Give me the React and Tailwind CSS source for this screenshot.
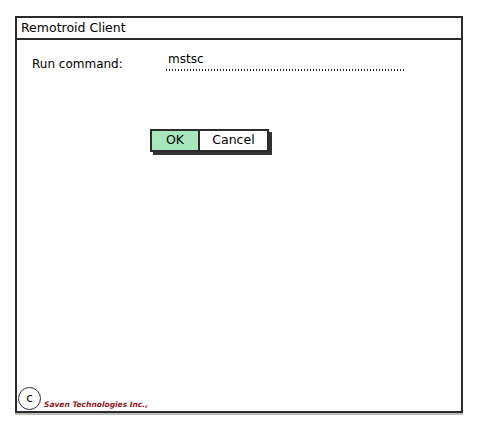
export default function App() {
  const font = { fontFamily: '"Comic Sans MS", "DejaVu Sans", sans-serif' };
  return (
    <div className="w-[495px] h-[445px] bg-white pt-[16px] pl-[15px]" style={font}>
      <div className="w-[448px] h-[397px] border-2 border-[#2b2b2b] flex flex-col shadow-[0_2px_0_#bbb]">
        <div className="h-[22px] border-b-2 border-[#2b2b2b] flex items-center pl-[4px] text-[12.5px] text-black leading-none">
          Remotroid Client
        </div>
        <div className="flex-1 flex flex-col relative">
          <div className="flex items-end mt-[13px] ml-[15px] h-[18px]">
            <span className="text-[12px] w-[134px] leading-none pb-[1px]">Run command:</span>
            <div className="flex flex-col w-[240px]">
              <span className="text-[12px] leading-none pl-[2px] -mt-[6px]">mstsc</span>
              <div className="h-[2px] mt-[4px] bg-[linear-gradient(to_right,#333_1px,transparent_1px)] bg-[length:3px_2px]" />
            </div>
          </div>
          <div className="ml-[133px] mt-[58px] flex w-[119px] h-[23px] border-2 border-[#2b2b2b] shadow-[3px_3px_0_#333]">
            <div className="w-[48px] bg-[#a8e6bb] border-r-2 border-[#2b2b2b] flex items-center justify-center text-[12.5px] leading-none">OK</div>
            <div className="flex-1 bg-white flex items-center justify-center text-[12.5px] leading-none">Cancel</div>
          </div>
          <div className="mt-auto flex items-end pb-[1px]">
            <div className="w-[23px] h-[23px] rounded-full border-[1.5px] border-[#2b2b4a] flex items-center justify-center text-[12px] leading-none ml-[1px] pb-[1px]">c</div>
            <span className="text-[7.5px] italic font-bold text-[#8b1a1a] ml-[3px] mb-[2px] leading-none">Saven Technologies Inc.,</span>
          </div>
        </div>
      </div>
    </div>
  );
}
